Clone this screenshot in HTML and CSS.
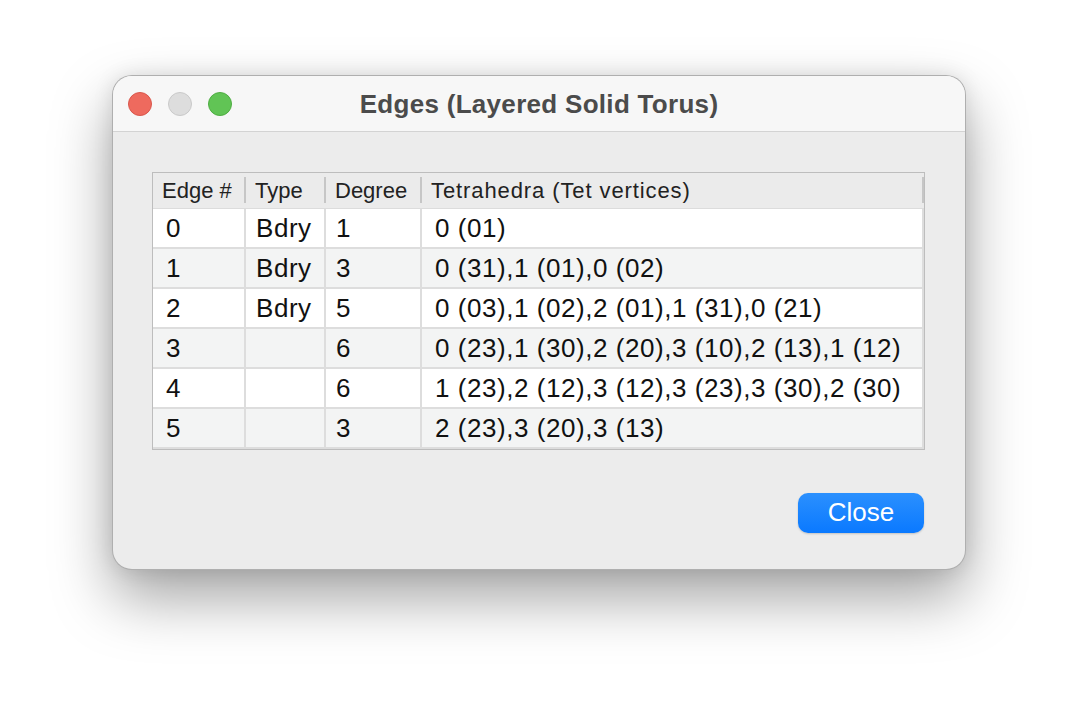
FILE: index.html
```html
<!DOCTYPE html>
<html lang="en">
<head>
<meta charset="utf-8">
<title>Edges (Layered Solid Torus)</title>
<link rel="stylesheet" href="styles.css">
</head>
<body>
<div class="desktop">
  <div class="window">
    <div class="titlebar">
      <div class="lights">
        <span class="light red"></span>
        <span class="light gray"></span>
        <span class="light green"></span>
      </div>
      <div class="title">Edges (Layered Solid Torus)</div>
      <div class="spacer"></div>
    </div>
    <div class="content">
      <div class="table">
        <div class="th">Edge #</div>
        <div class="th">Type</div>
        <div class="th">Degree</div>
        <div class="th wide">Tetrahedra (Tet vertices)</div>

        <div class="td c0">0</div><div class="td c1">Bdry</div><div class="td c2">1</div><div class="td c3">0 (01)</div>
        <div class="td c0 alt">1</div><div class="td c1 alt">Bdry</div><div class="td c2 alt">3</div><div class="td c3 alt">0 (31),1 (01),0 (02)</div>
        <div class="td c0">2</div><div class="td c1">Bdry</div><div class="td c2">5</div><div class="td c3">0 (03),1 (02),2 (01),1 (31),0 (21)</div>
        <div class="td c0 alt">3</div><div class="td c1 alt"></div><div class="td c2 alt">6</div><div class="td c3 alt">0 (23),1 (30),2 (20),3 (10),2 (13),1 (12)</div>
        <div class="td c0">4</div><div class="td c1"></div><div class="td c2">6</div><div class="td c3">1 (23),2 (12),3 (12),3 (23),3 (30),2 (30)</div>
        <div class="td c0 alt">5</div><div class="td c1 alt"></div><div class="td c2 alt">3</div><div class="td c3 alt">2 (23),3 (20),3 (13)</div>
      </div>
      <div class="actions">
        <button class="btn">Close</button>
      </div>
    </div>
  </div>
</div>
</body>
</html>
```
FILE: styles.css
```css
html, body {
  margin: 0;
  padding: 0;
  background: #ffffff;
}

.desktop {
  box-sizing: border-box;
  min-height: 718px;
  padding: 75px 0 0 112px;
  font-family: "Liberation Sans", Arial, sans-serif;
}

.window {
  width: 854px;
  height: 495px;
  box-sizing: border-box;
  border: 1px solid rgba(0, 0, 0, 0.26);
  border-radius: 20px;
  background: #ececec;
  overflow: hidden;
  box-shadow: 0 0 20px rgba(0, 0, 0, 0.10), 0 28px 60px rgba(0, 0, 0, 0.36);
}

.titlebar {
  height: 55px;
  background: #f7f7f7;
  border-bottom: 1px solid #d3d3d3;
  display: grid;
  grid-template-columns: 1fr auto 1fr;
  align-items: center;
}

.lights {
  display: flex;
  gap: 16px;
  padding-left: 15px;
}

.light {
  width: 24px;
  height: 24px;
  border-radius: 50%;
  box-sizing: border-box;
}

.red {
  background: #ee6a5e;
  border: 1px solid #d9574c;
}

.gray {
  background: #dddddd;
  border: 1px solid #c9c9c9;
}

.green {
  background: #61c455;
  border: 1px solid #4fad42;
}

.title {
  font-weight: bold;
  font-size: 26px;
  letter-spacing: 0.3px;
  color: #4b4b4b;
  padding-top: 1px;
}

.content {
  padding: 40px 40px 0 39px;
}

.table {
  display: grid;
  grid-template-columns: 93px 80px 96px 1fr;
  border: 1px solid #bdbdbd;
  background: #ffffff;
}

.th {
  position: relative;
  height: 35px;
  background: #ebebeb;
  font-size: 22px;
  color: #222222;
  display: flex;
  align-items: center;
  padding-left: 9px;
  white-space: nowrap;
  border-bottom: 1px solid #dcdcdc;
}

.th::after {
  content: "";
  position: absolute;
  right: 0;
  top: 4px;
  bottom: 5px;
  width: 2px;
  background: #c6c6c6;
}

.th.wide {
  letter-spacing: 0.9px;
}

.td {
  box-sizing: border-box;
  height: 40px;
  border-right: 2px solid #dddddd;
  border-bottom: 2px solid #dddddd;
  font-size: 26px;
  letter-spacing: 0.55px;
  color: #111111;
  display: flex;
  align-items: center;
  white-space: nowrap;
  background: #ffffff;
}

.td.alt {
  background: #f3f4f4;
}

.c0 { padding-left: 13px; }
.c1 { padding-left: 10px; }
.c2 { padding-left: 10px; }
.c3 { padding-left: 13px; }

.actions {
  display: flex;
  justify-content: flex-end;
  padding-top: 43px;
  padding-right: 1px;
}

.btn {
  width: 126px;
  height: 40px;
  border: none;
  border-radius: 10px;
  background: linear-gradient(#2b90fe, #0a79ff);
  color: #ffffff;
  font-family: "Liberation Sans", Arial, sans-serif;
  font-size: 26px;
  padding: 0 0 2px 0;
  box-shadow: 0 1px 2px rgba(0, 0, 0, 0.18);
}
```
